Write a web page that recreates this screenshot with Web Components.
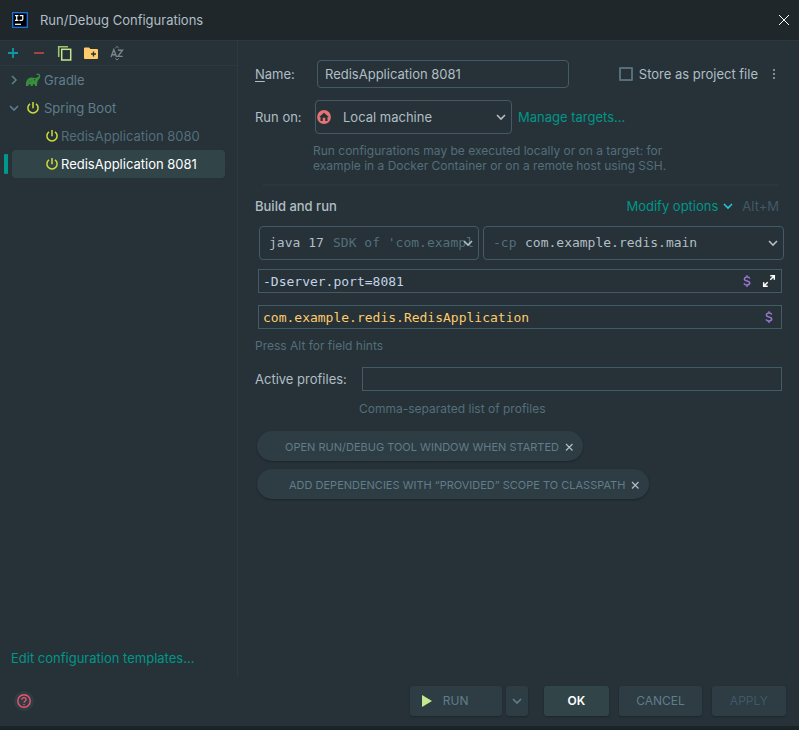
<!DOCTYPE html>
<html lang="en">
<head>
<meta charset="utf-8">
<title>Run/Debug Configurations</title>
<style>
:root{
  --bg:#263238;--title:#1f272b;--line:#2b3940;--border:#425b67;--text:#b0bec5;
  --muted:#607d8b;--hint:#546e7a;--accent:#009688;--raised:#2e3c43;--sel:#314549;
  --mono:"DejaVu Sans Mono","Liberation Mono",monospace;
}
body{margin:0;background:var(--bg);color:var(--text);font:13px/16px Inter,"Liberation Sans",sans-serif}
</style>
</head>
<body>
<run-dialog></run-dialog>
<script>
const ICONS = {
  logo:[16,'<rect x=".7" y=".7" width="14.600" height="14.600" fill="#000" stroke="#1677e8" stroke-width="1.300"/><path d="M3 3.600h3.400M4.700 3.600v4.700M3 8.300h3.400M7.800 3.600h3v3.400q0 1.300-1.300 1.300H7.500" fill="none" stroke="#fff" stroke-width="1.200"/><path d="M3 12.300h6" stroke="#fff" stroke-width="1.200"/>'],
  close:[16,'<path d="M3 3l10 10M13 3L3 13" stroke="#fff" stroke-width="1"/>'],
  add:[16,'<path d="M8 3v10M3 8h10" stroke="#0f97a7" stroke-width="1.800"/>'],
  remove:[16,'<path d="M3 8h10" stroke="#b54747" stroke-width="1.800"/>'],
  copy:[16,'<path d="M1.700 12V1.700H11" fill="none" stroke="#9fc470" stroke-width="1.600"/><rect x="4.700" y="4.300" width="9" height="10.700" fill="none" stroke="#c3e88d" stroke-width="1.500"/>'],
  folder:[16,'<path d="M1 3.500Q1 2.500 2 2.500h4l1.500 1.600H14q1 0 1 1V13q0 1-1 1H2q-1 0-1-1z" fill="#ffcb6b"/><path d="M10.500 6.500v5M8 9h5" stroke="#263238" stroke-width="1.300"/>'],
  sort:[16,'<path d="M2 12L4.800 4.800 7.600 12M3 9.700h3.600M9 5.200h4.500L9 11.400h4.700" fill="none" stroke="#78858b" stroke-width="1.400"/><path d="M6.300 3L8 1.400 9.700 3M6.300 13.400L8 15l1.700-1.600" fill="none" stroke="#78858b"/>'],
  right:[16,'<path d="M6 4l4 4-4 4" fill="none" stroke="currentColor" stroke-width="1.600"/>'],
  down:[16,'<path d="M4 6l4 4 4-4" fill="none" stroke="currentColor" stroke-width="1.600"/>'],
  gradle:[16,'<path d="M.900 14c-.200-4.200.800-7 3.500-8 2-.8 3.800-.2 5.600-.1 1.800.1 3.400-.5 3.800-1.800.2-.8-.3-1.400-.9-1.300-.5.100-.8.500-1.200.3-.5-.2-.3-.9.200-1.200 1.500-.9 3.200.1 3.300 1.800.2 3-2.500 3.900-2.700 5.800C12.300 11 12 12 12 14h-1.900c-.1-1.300-.5-2-1.200-2s-1.100.7-1.200 2H5.800c-.1-1.300-.5-2-1.200-2s-1.100.7-1.200 2z" fill="#388e3c"/><circle cx="9.600" cy="7.700" r=".7" fill="#263238"/><path d="M3.400 8.600q1.400 2 3.300.3" fill="none" stroke="#2f6b3a" stroke-width=".7"/>'],
  power:[16,'<path d="M5 3.800a5.100 5.100 0 1 0 6 0M8 2v6.300" fill="none" stroke="#cddc39" stroke-width="1.500"/>'],
  home:[16,'<circle cx="8" cy="8" r="6.900" fill="#e57373"/><path d="M3.200 7.900L8 3.700l4.800 4.200h-1.300V12H9.300V8.700H6.700V12H4.500V7.900z" fill="#263238"/><path d="M7.200 9.500h1.600V13H7.200z" fill="#e57373"/>'],
  dots:[16,'<path d="M7 3h2v2H7zM7 7h2v2H7zM7 11h2v2H7z" fill="#848c90"/>'],
  dollar:[16,'<path d="M10.800 5.600Q10.300 4 8 4T5.400 5.900Q5.400 7.400 8 7.900t2.700 2.200Q10.700 12 8 12T5.200 10.300M8 2.300v2M8 12v2" fill="none" stroke="#9575cd" stroke-width="1.500"/>'],
  expand:[16,'<path d="M9.300 2.700h4v4M13.300 2.700L9.300 6.700M6.700 13.300h-4v-4M2.700 13.300l4-4" fill="none" stroke="#fff" stroke-width="1.500"/>'],
  cross:[16,'<path d="M5 5l6.500 6.500M11.500 5L5 11.500" stroke="#b0bec5" stroke-width="1.200"/>'],
  play:[16,'<path d="M3 2l10 6-10 6z" fill="#c3e88d"/>'],
  help:[16,'<circle cx="8" cy="8" r="6.200" fill="none" stroke="#f0546f" stroke-width="1.400"/><path d="M5.900 6.700Q5.900 4.700 8 4.700t2.100 1.900Q10.100 7.600 9 8.200 8 8.800 8 9.800M8 10.900v1.300" fill="none" stroke="#f0546f" stroke-width="1.300"/>']
};
const BASE = '<style>:host,*{box-sizing:border-box}button,input,select{font:inherit;color:inherit;margin:0;padding:0;border:0;background:none;outline:0;appearance:none;min-width:0}button{cursor:pointer}a{color:var(--accent);text-decoration:none}</style>';
function define(name, render){
  customElements.define(name, class extends HTMLElement{
    connectedCallback(){
      if(this.shadowRoot) return;
      const t = document.createElement('template');
      t.innerHTML = BASE + render(k => this.getAttribute(k) || '', k => this.hasAttribute(k));
      this.attachShadow({mode:'open'}).append(t.content.cloneNode(true));
    }
  });
}

define('ui-icon', a => {
  const [box, body] = ICONS[a('name')];
  return `<style>:host{display:block;flex:none;width:16px;height:16px}svg{display:block;width:100%;height:100%}</style>
  <svg viewBox="0 0 ${box} ${box}" aria-hidden="true">${body}</svg>`;
});

define('icon-button', a => `<style>:host{display:block;flex:none}button{display:block}</style>
  <button type="button" aria-label="${a('label')}"><ui-icon name="${a('icon')}"></ui-icon></button>`);

define('title-bar', () => `<style>
  :host{display:flex;align-items:center;gap:12px;height:41px;padding:0 7px 0 12px;background:var(--title);border-bottom:1px solid var(--line)}
  h1{flex:1;margin:0;font-size:13px;font-weight:400}</style>
  <ui-icon name="logo"></ui-icon><h1><slot></slot></h1><icon-button icon="close" label="Close"></icon-button>`);

define('tree-row', (a, has) => `<style>
  :host{display:block;color:var(--muted)}
  :host([child]){color:var(--hint)}
  :host([selected]){color:#fff}
  .row{position:relative;display:flex;align-items:center;width:100%;height:28px;padding-left:6px;text-align:left}
  .mark{width:16px;margin-right:3px}
  .label{margin-left:3px}
  :host([child]) .row{padding-left:44px}
  :host([child]) .label{margin-left:1px}
  :host([selected]) .row{width:calc(100% - 24px);margin:0 12px;padding-left:32px;background:var(--sel);border-radius:4px}
  .bar{position:absolute;left:-8px;top:4px;width:4px;height:20px;background:var(--accent);border-radius:1px}</style>
  <button type="button" class="row">${has('selected') ? '<span class="bar"></span>' : ''}
  ${has('child') ? '' : `<ui-icon class="mark" name="${a('mark')}"></ui-icon>`}
  <ui-icon name="${a('icon')}"></ui-icon><span class="label"><slot></slot></span></button>`);

define('config-sidebar', () => `<style>
  :host{display:flex;flex-direction:column;border-right:1px solid var(--line)}
  .tools{display:flex;gap:10px;align-items:center;height:25px;padding-left:5px;border-bottom:1px solid var(--line)}
  nav{flex:1}
  .link{padding:0 11px 11px}</style>
  <div class="tools"><icon-button icon="add" label="Add"></icon-button><icon-button icon="remove" label="Remove"></icon-button><icon-button icon="copy" label="Copy"></icon-button><icon-button icon="folder" label="New folder"></icon-button><icon-button icon="sort" label="Sort"></icon-button></div>
  <nav aria-label="Configurations">
    <tree-row mark="right" icon="gradle">Gradle</tree-row>
    <tree-row mark="down" icon="power">Spring Boot</tree-row>
    <tree-row child icon="power">RedisApplication 8080</tree-row>
    <tree-row child selected icon="power">RedisApplication 8081</tree-row>
  </nav>
  <div class="link"><a href="#templates">Edit configuration templates...</a></div>`);

/* Text box; its own label is shown when "label" is given, otherwise "name" names the box. */
define('text-field', (a, has) => `<style>
  :host{display:flex;align-items:center}
  label{flex:none;width:var(--label-width,auto)}
  u{text-underline-offset:2px}
  .box{flex:1;min-width:0;display:flex;align-items:center;gap:6px;height:24px;padding:0 4px;border:1px solid var(--border)}
  input{flex:1;height:100%}
  :host([round]) .box{height:28px;padding:0 7px;border-radius:4px}
  :host([code]) input{font-family:var(--mono)}</style>
  ${has('label') ? `<label for="f">${a('label').replace('_N','<u>N</u>')}</label>` : ''}
  <div class="box"><input id="f" type="text" value="${a('value')}" ${has('label') ? '' : `aria-label="${a('name')}"`}><slot></slot></div>`);

/* Drop-down; slots "before" and "after" lie over the select, on either side of its value. */
define('combo-box', (a, has) => `<style>
  :host{display:flex;align-items:center}
  label{flex:none;width:var(--label-width,auto)}
  .box{flex:1;min-width:0;display:grid;align-items:center;height:34px;border:1px solid var(--border);border-radius:4px}
  .box>*{grid-area:1/1}
  select{width:100%;height:100%;padding-left:var(--inset,9px)}
  .over{display:flex;min-width:0;pointer-events:none;color:var(--hint)}
  .arrow{justify-self:end;margin-right:2px}
  :host([code]){font-family:var(--mono)}
  .after{padding-left:73px;margin-right:4px;overflow:hidden;white-space:nowrap}
  .before{padding-left:var(--before,9px)}</style>
  ${has('label') ? `<label for="s">${a('label')}</label>` : ''}
  <div class="box"><select id="s" ${has('label') ? '' : `aria-label="${a('name')}"`}><option>${a('value')}</option></select>
  <span class="over before"><slot name="before"></slot></span><span class="over after"><slot name="after"></slot></span>
  <ui-icon class="arrow" name="down"></ui-icon></div>`);

define('option-chip', () => `<style>
  :host{display:flex;align-items:center;gap:2px;width:fit-content;height:30px;padding:0 6px 0 28px;border-radius:15px;background:var(--raised);color:var(--muted);font-size:11px;box-shadow:0 1px 2px #1c262b}
  :host([wide]){padding-left:32px}
  span{padding-top:2px}icon-button{padding-top:2px}</style>
  <span><slot></slot></span><icon-button icon="cross" label="Remove option"></icon-button>`);

define('push-button', (a, has) => `<style>
  :host{display:block;flex:none}
  button{display:flex;align-items:center;justify-content:center;gap:8px;height:30px;padding:var(--pad,0 17px);border-radius:3px;background:var(--raised);color:var(--muted);font-size:12px;box-shadow:0 1px 2px #1c262b}
  :host([primary]) button{background:#314549;color:#fff;font-weight:600}
  button:disabled{color:#415967}</style>
  <button type="button" ${has('disabled') ? 'disabled' : ''} ${a('name') ? `aria-label="${a('name')}"` : ''}><slot></slot></button>`);

define('config-form', () => `<style>
  :host{display:block;padding:19px 15px 0 17px}
  .row{display:flex;align-items:center}
  .name{--label-width:62px;flex:1}
  .check{display:flex;align-items:center;gap:6px;margin-left:50px}
  .check input{width:14px;height:14px;border:2px solid var(--hint);border-radius:1px}
  .check+icon-button{margin:0 2px 0 8px}
  .run{margin-top:12px;gap:6px}
  .target{--label-width:60px;--inset:27px;--before:0px;flex:0 1 257px}
  .hint{color:var(--hint);font-size:12px;line-height:15px;margin:0}
  .note{max-width:360px;margin:9px 0 0 58px}
  hr{height:2px;margin:11px 6px 12px 8px;border:0;background:#2a373e}
  h2{flex:1;margin:0;font-size:13px;font-weight:500}
  .modify{display:flex;align-items:center;gap:2px;color:var(--accent)}
  .modify ui-icon{color:#26c6da}
  kbd{font:inherit;color:#415967;margin:0 5px 0 6px}
  .pair{display:flex;gap:4px;margin:12px 0 9px 4px}
  .jdk{flex:220 1 0;min-width:0}.cp{flex:301 1 0;min-width:0;--inset:41px}
  .args{margin:0 2px 12px 3px;color:#c5d3e6}
  .main{margin-bottom:9px;color:#ffcb6b}
  .press{margin-bottom:14px}
  .profiles{--label-width:107px;margin-right:2px}
  .comma{margin:10px 0 15px 104px}
  .chips{display:grid;gap:8px;padding-left:2px}</style>
  <div class="row"><text-field class="name" round label="_Name:" value="RedisApplication 8081"></text-field>
    <label class="check"><input type="checkbox"> Store as project file</label><icon-button icon="dots" label="Storage options"></icon-button></div>
  <div class="row run"><combo-box class="target" label="Run on:" value="Local machine"><ui-icon slot="before" name="home"></ui-icon></combo-box><a href="#targets">Manage targets...</a></div>
  <p class="hint note">Run configurations may be executed locally or on a target: for example in a Docker Container or on a remote host using SSH.</p>
  <hr>
  <div class="row"><h2>Build and run</h2><button type="button" class="modify">Modify options<ui-icon name="down"></ui-icon></button><kbd>Alt+M</kbd></div>
  <div class="pair"><combo-box class="jdk" code name="JDK" value="java 17"><span slot="after">SDK of 'com.exampl</span></combo-box>
    <combo-box class="cp" code name="Classpath" value="com.example.redis.main"><span slot="before">-cp</span></combo-box></div>
  <text-field class="args" code name="VM options" value="-Dserver.port=8081"><icon-button icon="dollar" label="Insert macro"></icon-button><icon-button icon="expand" label="Expand"></icon-button></text-field>
  <text-field class="args main" code name="Main class" value="com.example.redis.RedisApplication"><icon-button icon="dollar" label="Insert macro"></icon-button></text-field>
  <p class="hint press">Press Alt for field hints</p>
  <text-field class="profiles" label="Active profiles:"></text-field>
  <p class="hint comma">Comma-separated list of profiles</p>
  <div class="chips"><option-chip>OPEN RUN/DEBUG TOOL WINDOW WHEN STARTED</option-chip>
  <option-chip wide>ADD DEPENDENCIES WITH “PROVIDED” SCOPE TO CLASSPATH</option-chip></div>`);

define('dialog-footer', () => `<style>
  :host{display:flex;align-items:center;gap:10px;height:53px;padding:0 13px 1px 14px;border-bottom:4px solid #1a2327}
  .help{margin-right:auto;padding:2px;border-radius:50%;background:var(--raised)}
  .split{display:flex;gap:4px;margin-right:6px}
  .start{--pad:0 33px 0 9px}
  .more{--pad:0 3px}.ok{--pad:0 24px}.apply{--pad:0 18px}</style>
  <icon-button class="help" icon="help" label="Help"></icon-button>
  <div class="split"><push-button class="start"><ui-icon name="play"></ui-icon>RUN</push-button>
  <push-button class="more" name="More run actions"><ui-icon name="down"></ui-icon></push-button></div>
  <push-button class="ok" primary>OK</push-button><push-button>CANCEL</push-button><push-button class="apply" disabled>APPLY</push-button>`);

define('run-dialog', () => `<style>
  :host{display:flex;flex-direction:column;min-height:100vh}
  main{flex:1;display:grid;grid-template-columns:238px minmax(0,1fr)}</style>
  <title-bar>Run/Debug Configurations</title-bar>
  <main><config-sidebar></config-sidebar><config-form></config-form></main>
  <dialog-footer></dialog-footer>`);
</script>
</body>
</html>
